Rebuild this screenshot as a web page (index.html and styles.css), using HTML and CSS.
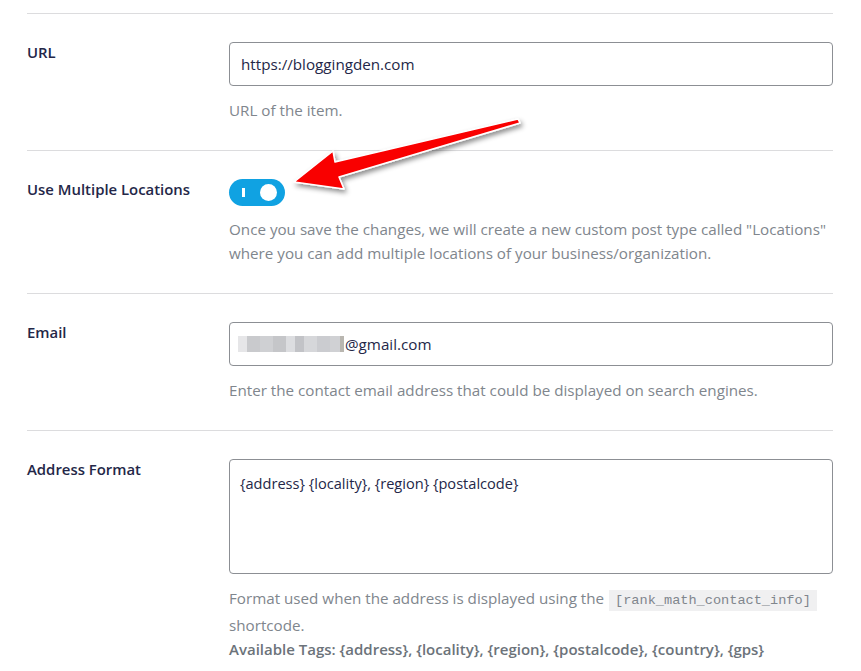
FILE: index.html
```html
<!DOCTYPE html>
<html lang="en">

<head>
    <meta charset="UTF-8">
    <meta name="viewport" content="width=device-width, initial-scale=1.0">
    <title>Local SEO Settings</title>
    <link rel="stylesheet" href="styles.css">
</head>

<body>
    <div class="settings">
        <!--URL-->
        <div class="field">
            <label class="field-label" for="url">URL</label>
            <div class="field-body">
                <input class="text-input" id="url" type="text" value="https://bloggingden.com">
                <p class="desc">URL of the item.</p>
            </div>
        </div>

        <!--Multiple locations-->
        <div class="field">
            <label class="field-label">Use Multiple Locations</label>
            <div class="field-body">
                <span class="toggle on">
                    <span class="toggle-bar"></span>
                    <span class="toggle-knob"></span>
                </span>
                <p class="desc">Once you save the changes, we will create a new custom post type called "Locations" where you can add multiple locations of your business/organization.</p>
            </div>
        </div>

        <!--Email-->
        <div class="field">
            <label class="field-label" for="email">Email</label>
            <div class="field-body">
                <div class="text-input fake-input">
                    <span class="blur"></span>@gmail.com
                </div>
                <p class="desc">Enter the contact email address that could be displayed on search engines.</p>
            </div>
        </div>

        <!--Address format-->
        <div class="field">
            <label class="field-label" for="format">Address Format</label>
            <div class="field-body">
                <textarea class="textarea" id="format">{address} {locality}, {region} {postalcode}</textarea>
                <p class="desc">Format used when the address is displayed using the <code>[rank_math_contact_info]</code> shortcode.<br>
                    <strong>Available Tags: {address}, {locality}, {region}, {postalcode}, {country}, {gps}</strong></p>
            </div>
        </div>
    </div>

    <!--ok isareti-->
    <svg class="arrow" width="861" height="671" viewBox="0 0 861 671">
        <defs>
            <filter id="shadow" x="-10%" y="-20%" width="130%" height="160%">
                <feDropShadow dx="2" dy="3" stdDeviation="2.5" flood-color="#000" flood-opacity="0.45" />
            </filter>
        </defs>
        <polygon points="294,182 333,151 335,162 518,119 520,123 339,177 344,189"
            fill="#f90000" stroke="#fff" stroke-width="1.5" stroke-linejoin="round" filter="url(#shadow)" />
    </svg>
</body>

</html>
```

FILE: styles.css
```css
body {
    margin: 0;
    background-color: #fff;
    font-family: "Open Sans", "Noto Sans", sans-serif;
    font-size: 15.2px;
    color: #242748;
}

.settings {
    padding: 0 28px 0 27px;
}

.field {
    display: flex;
    border-top: 1px solid #dcdcde;
    margin-top: 13px;
    padding: 28px 0 28px;
}

.field + .field {
    margin-top: 0;
}

.field-label {
    width: 202px;
    flex-shrink: 0;
    font-weight: 600;
    font-size: 14.9px;
    line-height: 21px;
    color: #242748;
}

.field-body {
    flex: 1;
}

.text-input {
    box-sizing: border-box;
    display: block;
    width: 100%;
    height: 44px;
    padding: 0 11px;
    border: 1px solid #8c8f94;
    border-radius: 4px;
    font-family: inherit;
    font-size: 15.2px;
    color: #242748;
    background-color: #fff;
}

.fake-input {
    display: flex;
    align-items: center;
    padding-left: 8px;
}

/*e-posta adresinin gizlenen kismi*/
.blur {
    display: inline-block;
    width: 106px;
    height: 16px;
    margin-right: 1px;
    background:
        linear-gradient(90deg,
            #e6e6e8 0 9px, #c9cacd 9px 22px, #cfd0d3 22px 35px, #c5c6c9 35px 48px,
            #dcdde0 48px 57px, #c2c3c7 57px 66px, #d6d7da 66px 79px, #cbccd0 79px 92px,
            #d0d1d4 92px 102px, #b9b6b0 102px 106px);
}

.textarea {
    box-sizing: border-box;
    display: block;
    width: 100%;
    height: 115px;
    padding: 13px 10px;
    border: 1px solid #8c8f94;
    border-radius: 4px;
    font-family: inherit;
    font-size: 14.6px;
    color: #242748;
    resize: none;
}

.desc {
    margin: 12px 0 0;
    font-size: 15.2px;
    line-height: 24px;
    color: #80868d;
}

.desc strong {
    font-weight: 600;
    font-size: 15px;
    color: #6c737a;
}

.desc code {
    font-family: "Liberation Mono", "DejaVu Sans Mono", monospace;
    font-size: 13.6px;
    padding: 3px 6px;
    margin-left: 1px;
    background-color: #f0f0f1;
    color: #80868d;
}

/*acik durumdaki anahtar*/
.toggle {
    position: relative;
    display: block;
    width: 56px;
    height: 27px;
    border-radius: 14px;
    background-color: #10a2e2;
}

.toggle + .desc {
    margin-top: 11px;
}

.toggle-bar {
    position: absolute;
    left: 13px;
    top: 9px;
    width: 3px;
    height: 9px;
    background-color: #fff;
}

.toggle-knob {
    position: absolute;
    right: 8px;
    top: 5px;
    width: 17px;
    height: 17px;
    border-radius: 50%;
    background-color: #fff;
}

.arrow {
    position: absolute;
    left: 0;
    top: 0;
    pointer-events: none;
}
```
